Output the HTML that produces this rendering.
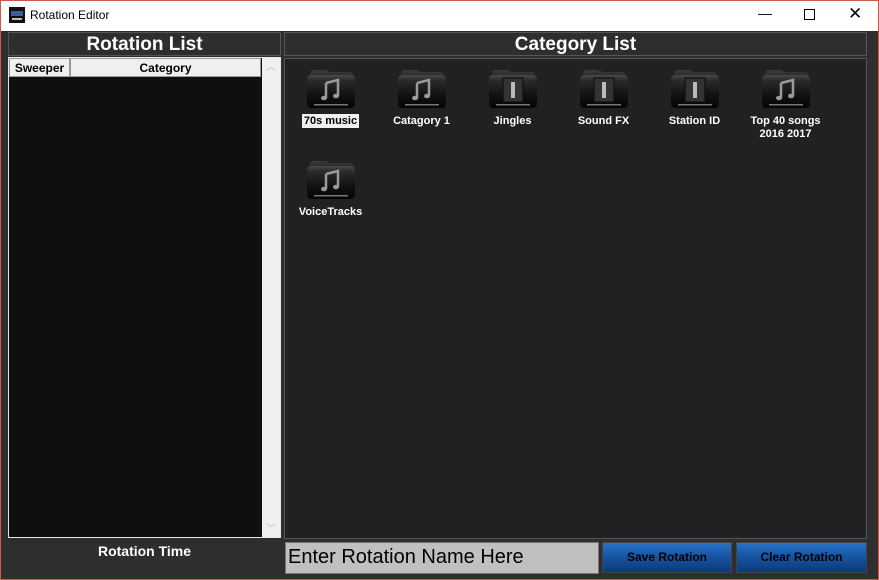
<!DOCTYPE html>
<html><head><style>
*{margin:0;padding:0;box-sizing:border-box}
body{width:879px;height:580px;overflow:hidden;background:#2e2e2e;font-family:"Liberation Sans",Arial,sans-serif;position:relative}
.win{position:absolute;left:0;top:0;width:879px;height:580px;border:1px solid #c9594a;z-index:5;pointer-events:none}
.title{position:absolute;left:0;top:0;width:879px;height:31px;background:#fff;font-size:12px;color:#000}
.title span{position:absolute;left:30px;top:8px}
.ab{position:absolute}
.hdr{position:absolute;border:1px solid #555;background:#2e2e2e;color:#fff;font-weight:bold;font-size:19px;text-align:center;line-height:23px}
.item{position:absolute;width:91px;text-align:center;color:#fff;font-weight:bold;font-size:11px}
.item svg{display:block;margin:0 auto}
.item .l{margin-top:7px;line-height:13px}
.btn{position:absolute;top:542px;height:31px;border:1px solid #444;background:linear-gradient(#2a72c4,#1858a8 40%,#0c3a78);color:#000;font-weight:bold;font-size:12px;text-align:center;line-height:29px}
</style></head><body>
<svg width="0" height="0" style="position:absolute"><defs>
<linearGradient id="g" x1="0" y1="0" x2="0" y2="1"><stop offset="0" stop-color="#4a4a4a"/><stop offset=".15" stop-color="#2c2c2c"/><stop offset=".6" stop-color="#121212"/><stop offset="1" stop-color="#050505"/></linearGradient>
<linearGradient id="t" x1="0" y1="0" x2="0" y2="1"><stop offset="0" stop-color="#3c3c3c"/><stop offset="1" stop-color="#222"/></linearGradient>
<g id="f"><path d="M4 6 Q4 2 8 2 L18 2 Q21 2 23 4 L44 4 Q47 4 47 7 L47 10 L4 10Z" fill="url(#t)"/><rect x="1" y="7" width="48" height="33" rx="4" fill="url(#g)"/><rect x="8" y="36" width="34" height="1.5" fill="#777"/></g>
<g id="n"><path d="M20 15 L32 12 L32 28 M20 15 L20 30" stroke="#9a9a9a" stroke-width="2.5" fill="none"/><ellipse cx="18" cy="30" rx="3" ry="2.3" fill="#9a9a9a"/><ellipse cx="30" cy="28" rx="3" ry="2.3" fill="#9a9a9a"/></g>
<g id="b"><rect x="15" y="10" width="20" height="24" fill="#333" stroke="#0a0a0a"/><rect x="23" y="14" width="4" height="16" fill="#bbb"/></g>
</defs></svg>
<div class="win"></div>
<div class="title">
<svg class="ab" style="left:9px;top:7px" width="16" height="16"><rect width="16" height="16" fill="#111"/><rect x="2" y="4" width="12" height="5" fill="#3a5f9a"/><rect x="3" y="11" width="10" height="2" fill="#bbb"/></svg>
<span>Rotation Editor</span>
<span style="left:758px;top:5px;font-size:14px">—</span>
<div class="ab" style="left:804px;top:9px;width:11px;height:11px;border:1px solid #000"></div>
<span style="left:848px;top:4px;font-size:17px">✕</span>
</div>
<div class="hdr" style="left:8px;top:32px;width:273px;height:24px">Rotation List</div>
<div class="hdr" style="left:284px;top:32px;width:583px;height:24px">Category List</div>
<div class="ab" style="left:8px;top:57px;width:273px;height:481px;background:#0f0f0f;border:1px solid #e8e8e8"></div>
<div class="ab" style="left:9px;top:58px;width:61px;height:19px;background:#efefef;border:1px solid #999;font-size:12px;font-weight:bold;text-align:center;line-height:18px">Sweeper</div>
<div class="ab" style="left:70px;top:58px;width:191px;height:19px;background:#efefef;border:1px solid #999;font-size:12px;font-weight:bold;text-align:center;line-height:18px">Category</div>
<div class="ab" style="left:262px;top:58px;width:18px;height:479px;background:#f0f0f0;color:#bbb;font-size:10px;text-align:center">︿<div style="position:absolute;bottom:2px;width:18px">﹀</div></div>
<div class="ab" style="left:8px;top:543px;width:273px;text-align:center;color:#fff;font-weight:bold;font-size:14px">Rotation Time</div>
<div class="ab" style="left:284px;top:58px;width:583px;height:481px;background:#212121;border:1px solid #555"></div>

<div class="item" style="left:285px;top:68px"><svg width="50" height="40"><use href="#f"/><use href="#n"/></svg><div class="l"><span style="background:#f0f0f0;color:#000;padding:1px 2px">70s music</span></div></div>
<div class="item" style="left:376px;top:68px"><svg width="50" height="40"><use href="#f"/><use href="#n"/></svg><div class="l">Catagory 1</div></div>
<div class="item" style="left:467px;top:68px"><svg width="50" height="40"><use href="#f"/><use href="#b"/></svg><div class="l">Jingles</div></div>
<div class="item" style="left:558px;top:68px"><svg width="50" height="40"><use href="#f"/><use href="#b"/></svg><div class="l">Sound FX</div></div>
<div class="item" style="left:649px;top:68px"><svg width="50" height="40"><use href="#f"/><use href="#b"/></svg><div class="l">Station ID</div></div>
<div class="item" style="left:740px;top:68px"><svg width="50" height="40"><use href="#f"/><use href="#n"/></svg><div class="l">Top 40 songs<br>2016 2017</div></div>
<div class="item" style="left:285px;top:159px"><svg width="50" height="40"><use href="#f"/><use href="#n"/></svg><div class="l">VoiceTracks</div></div>

<div class="ab" style="left:285px;top:542px;width:314px;height:32px;background:#c0c0c0;border:1px solid #777;font-size:20px;line-height:28px;padding-left:2px;color:#000">Enter Rotation Name Here</div>
<div class="btn" style="left:602px;width:130px">Save Rotation</div>
<div class="btn" style="left:736px;width:131px">Clear Rotation</div>
</body></html>
